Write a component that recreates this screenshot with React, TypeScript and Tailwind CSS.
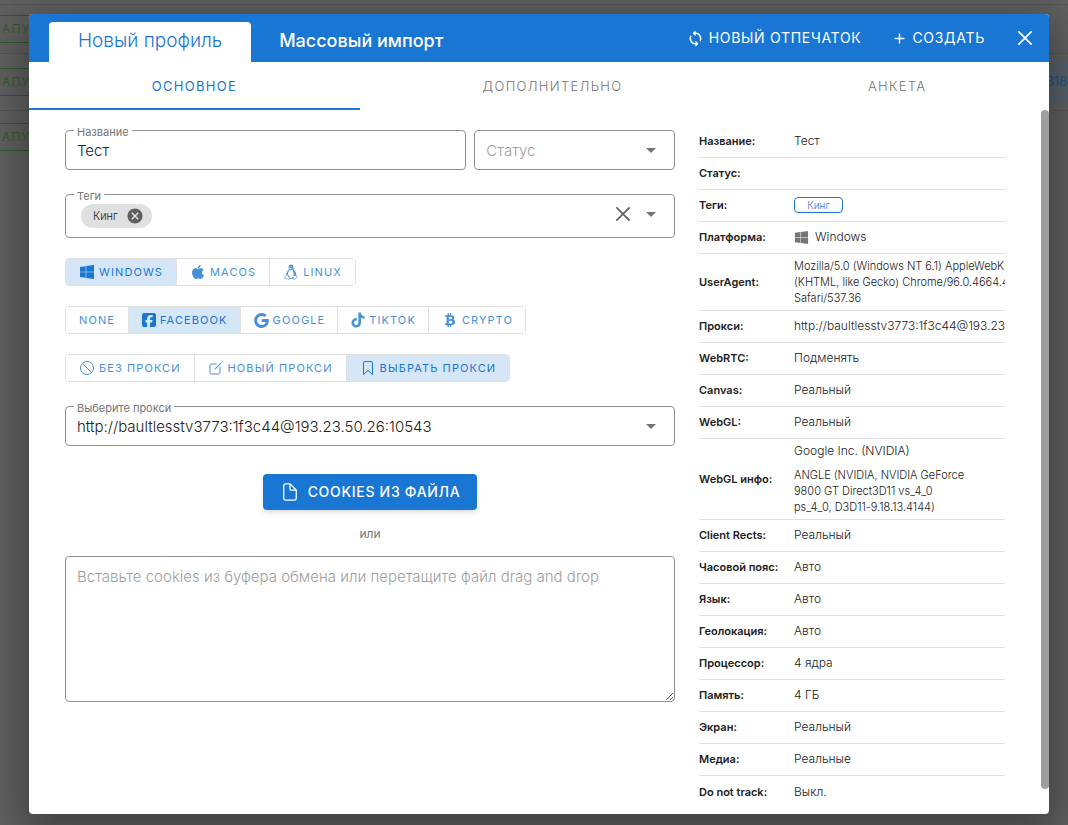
import React, { useState } from "react";
import type { ReactNode } from "react";
import {
  IoLogoWindows,
  IoLogoApple,
  IoLogoTux,
  IoLogoGoogle,
  IoLogoTiktok,
  IoBanOutline,
  IoCreateOutline,
  IoBookmarkOutline,
  IoDocumentOutline,
  IoCloseOutline,
} from "react-icons/io5";
import { IoMdSync } from "react-icons/io";
import { FaSquareFacebook, FaBtc } from "react-icons/fa6";
import { MdAdd, MdCancel, MdArrowDropDown } from "react-icons/md";

type Option = { id: string; label: string; icon?: ReactNode };

const systems: Option[] = [
  { id: "windows", label: "Windows", icon: <IoLogoWindows size={16} /> },
  { id: "macos", label: "MacOS", icon: <IoLogoApple size={16} /> },
  { id: "linux", label: "Linux", icon: <IoLogoTux size={16} /> },
];

const sites: Option[] = [
  { id: "none", label: "None" },
  { id: "facebook", label: "Facebook", icon: <FaSquareFacebook size={16} /> },
  { id: "google", label: "Google", icon: <IoLogoGoogle size={17} /> },
  { id: "tiktok", label: "TikTok", icon: <IoLogoTiktok size={16} /> },
  { id: "crypto", label: "Crypto", icon: <FaBtc size={14} className="mx-[2px]" /> },
];

const proxyModes: Option[] = [
  { id: "off", label: "Без прокси", icon: <IoBanOutline size={16} /> },
  { id: "new", label: "Новый прокси", icon: <IoCreateOutline size={16} /> },
  { id: "pick", label: "Выбрать прокси", icon: <IoBookmarkOutline size={16} /> },
];

function ToggleGroup({ label, options, initial, dense = false }: { label: string; options: Option[]; initial: string; dense?: boolean }) {
  const [active, setActive] = useState(initial);
  return (
    <div role="group" aria-label={label} className="flex w-fit divide-x divide-[#e0e0e0] overflow-hidden rounded border border-[#e0e0e0]">
      {options.map((o) => {
        const tone = active === o.id ? "bg-[#d5e6f7] text-[#1976d2]" : "bg-white text-[#4791db]";
        const padding = dense && o.icon ? "px-3" : "px-[13px]";
        return (
          <button
            key={o.id}
            type="button"
            aria-pressed={active === o.id}
            onClick={() => setActive(o.id)}
            className={`flex h-[26px] items-center text-[11px] tracking-widest whitespace-nowrap uppercase ${dense ? "gap-[3px]" : "gap-1"} ${tone} ${padding}`}
          >
            {o.icon}
            {o.label}
          </button>
        );
      })}
    </div>
  );
}

function FloatingLabel({ htmlFor, children }: { htmlFor: string; children: ReactNode }) {
  return (
    <label htmlFor={htmlFor} className="absolute -top-[5px] left-2 bg-white px-[3px] text-[11px] leading-3 text-[#757575]">
      {children}
    </label>
  );
}

const fieldBox = "relative flex items-center rounded border border-[#8f8f8f]";

const details: { name: string; value: ReactNode }[] = [
  { name: "Название:", value: "Тест" },
  { name: "Статус:", value: "" },
  {
    name: "Теги:",
    value: (
      <span className="flex h-4 w-[49px] items-center justify-center rounded border border-[#1976d2] pt-px text-[10px] text-[#1976d2]">
        Кинг
      </span>
    ),
  },
  {
    name: "Платформа:",
    value: (
      <span className="flex items-center gap-[6px]">
        <IoLogoWindows size={15} className="text-[#757575]" />
        Windows
      </span>
    ),
  },
  {
    name: "UserAgent:",
    value: (
      <p className="text-[11px] leading-4">
        Mozilla/5.0 (Windows NT 6.1) AppleWebKit/537.36
        <br />
        (KHTML, like Gecko) Chrome/96.0.4664.45
        <br />
        Safari/537.36
      </p>
    ),
  },
  { name: "Прокси:", value: "http://baultlesstv3773:1f3c44@193.23.50.26:10543" },
  { name: "WebRTC:", value: "Подменять" },
  { name: "Canvas:", value: "Реальный" },
  { name: "WebGL:", value: "Реальный" },
  {
    name: "WebGL инфо:",
    value: (
      <>
        <p className="mb-2">Google Inc. (NVIDIA)</p>
        <p className="text-[11px] leading-4">
          ANGLE (NVIDIA, NVIDIA GeForce
          <br />
          9800 GT Direct3D11 vs_4_0
          <br />
          ps_4_0, D3D11-9.18.13.4144)
        </p>
      </>
    ),
  },
  { name: "Client Rects:", value: "Реальный" },
  { name: "Часовой пояс:", value: "Авто" },
  { name: "Язык:", value: "Авто" },
  { name: "Геолокация:", value: "Авто" },
  { name: "Процессор:", value: "4 ядра" },
  { name: "Память:", value: "4 ГБ" },
  { name: "Экран:", value: "Реальный" },
  { name: "Медиа:", value: "Реальные" },
  { name: "Do not track:", value: "Выкл." },
];

const backdropRows = [
  { height: "h-[49px]", id: "" },
  { height: "h-[57px]", id: "318" },
  { height: "h-[53px]", id: "" },
];

function Backdrop() {
  return (
    <div aria-hidden="true" className="min-h-screen overflow-hidden bg-[#616161] pt-1">
      {backdropRows.map((row, i) => (
        <div key={i} className={`flex items-center justify-between border-t border-[#555555] ${row.height}`}>
          <div className="flex h-7 w-32 items-center border-y border-[#2c5a2e] pl-[2px] text-xs tracking-widest text-[#2f5f31]">АПУС</div>
          <div className={row.id ? "flex h-10 w-[22px] items-center bg-[#59636c] text-[13px] text-[#24507c]" : "h-10"}>{row.id}</div>
        </div>
      ))}
    </div>
  );
}

export default function App() {
  const [name, setName] = useState("Тест");
  return (
    <div className="font-['Inter',sans-serif] text-[#212121]">
      <Backdrop />
      <div className="absolute inset-x-0 top-0 pt-[14px] pr-[19px] pb-[11px] pl-[29px]">
        <main role="dialog" aria-label="Новый профиль" className="overflow-hidden rounded bg-white shadow-[0_11px_40px_8px_rgba(0,0,0,0.35)]">
          <header className="flex h-12 items-end bg-[#1976d2] pl-5 text-white">
            <button type="button" className="h-10 rounded-t bg-white px-[29px] pb-[2px] text-[19px] font-light text-[#1976d2]">Новый профиль</button>
            <button type="button" className="h-10 px-7 pb-[2px] text-lg font-medium">Массовый импорт</button>
            <div className="ml-auto flex h-12 items-center pr-[10px]">
              <button type="button" className="flex items-center gap-1 px-[14px] text-sm tracking-wider uppercase">
                <IoMdSync size={19} />
                Новый отпечаток
              </button>
              <button type="button" className="flex items-center gap-1 px-4 text-sm tracking-wider uppercase">
                <MdAdd size={17} />
                Создать
              </button>
              <button type="button" aria-label="Закрыть" className="ml-[10px]">
                <IoCloseOutline size={28} />
              </button>
            </div>
          </header>

          <nav role="tablist" className="flex h-12 text-[13px] tracking-widest text-[#757575]">
            <button type="button" role="tab" aria-selected="true" className="flex-auto border-y-2 border-t-transparent border-b-[#1976d2] pt-[2px] text-[#1976d2] uppercase">Основное</button>
            <button type="button" role="tab" aria-selected="false" className="flex-auto pt-[2px] font-light uppercase">Дополнительно</button>
            <button type="button" role="tab" aria-selected="false" className="flex-auto pt-[2px] font-light uppercase">Анкета</button>
          </nav>

          <div className="flex">
            <div className="grid min-w-0 flex-1 grid-cols-[610fr_306fr] gap-6 px-9 pb-[6px]">
              <form className="flex min-w-0 flex-col pt-5">
                <div className="grid grid-cols-[2fr_1fr] gap-2">
                  <div className={fieldBox}>
                    <FloatingLabel htmlFor="name">Название</FloatingLabel>
                    <input id="name" value={name} onChange={(e) => setName(e.target.value)} className="h-[38px] w-full bg-transparent px-[11px] text-[15px] font-light outline-none" />
                  </div>
                  <div className={fieldBox}>
                    <select aria-label="Статус" className="h-[38px] w-full appearance-none bg-transparent px-[11px] pt-[2px] text-[15px] font-light text-[#9e9e9e] outline-none">
                      <option>Статус</option>
                    </select>
                    <MdArrowDropDown size={24} className="pointer-events-none absolute right-[11px] text-[#757575]" />
                  </div>
                </div>

                <div className="relative mt-6 flex h-11 items-center rounded border border-[#8f8f8f] pr-[11px] pl-[15px]">
                  <FloatingLabel htmlFor="tags">Теги</FloatingLabel>
                  <span className="flex h-6 items-center gap-2 rounded-full bg-[#e0e0e0] pr-2 pl-3 text-[11px] font-light">
                    Кинг
                    <button type="button" aria-label="Удалить тег" className="text-[#616161]">
                      <MdCancel size={18} />
                    </button>
                  </span>
                  <input id="tags" className="h-8 min-w-0 flex-1 bg-transparent px-2 text-[15px] outline-none" />
                  <div className="mb-1 flex items-center gap-[2px]">
                    <button type="button" aria-label="Очистить" className="text-[#616161]">
                      <IoCloseOutline size={28} />
                    </button>
                    <MdArrowDropDown size={24} className="text-[#757575]" />
                  </div>
                </div>

                <div className="mt-5 flex flex-col gap-5">
                  <ToggleGroup label="Платформа" options={systems} initial="windows" />
                  <ToggleGroup label="Сайт" options={sites} initial="facebook" dense />
                  <ToggleGroup label="Прокси" options={proxyModes} initial="pick" />
                </div>

                <div className="relative mt-6 flex items-center rounded border border-[#8f8f8f]">
                  <FloatingLabel htmlFor="proxy">Выберите прокси</FloatingLabel>
                  <select id="proxy" className="h-[38px] w-full appearance-none bg-transparent px-[11px] pt-[2px] text-[15px] font-light outline-none">
                    <option>http://baultlesstv3773:1f3c44@193.23.50.26:10543</option>
                  </select>
                  <MdArrowDropDown size={24} className="pointer-events-none absolute right-[11px] text-[#757575]" />
                </div>

                <button type="button" className="mt-7 flex h-9 items-center gap-2 self-center rounded bg-[#1976d2] px-[17px] text-sm font-medium tracking-wider text-white uppercase shadow-md">
                  <IoDocumentOutline size={20} />
                  Cookies из файла
                </button>
                <p className="mt-[14px] text-center text-xs leading-5 text-[#757575]">или</p>
                <textarea aria-label="Cookies" placeholder="Вставьте cookies из буфера обмена или перетащите файл drag and drop" className="mt-3 h-[146px] w-full rounded border border-[#8f8f8f] px-[11px] py-[9px] text-[15px] font-light outline-none placeholder:text-[#9e9e9e]" />
              </form>

              <div className="min-w-0 pt-[15px]">
                <table className="w-full table-fixed text-left leading-4">
                  <tbody>
                    {details.map((d) => (
                      <tr key={d.name} className="h-8 border-b border-[#e0e0e0] last:h-[33px] last:border-b-0">
                        <th scope="row" className="w-[95px] text-[11px] font-semibold whitespace-nowrap">{d.name}</th>
                        <td className="overflow-hidden py-1 text-xs font-light whitespace-nowrap">{d.value}</td>
                      </tr>
                    ))}
                  </tbody>
                </table>
              </div>
            </div>
            <div className="w-2 pb-[25px]">
              <div className="h-full rounded-full bg-[#9e9e9e]" />
            </div>
          </div>
        </main>
      </div>
    </div>
  );
}
